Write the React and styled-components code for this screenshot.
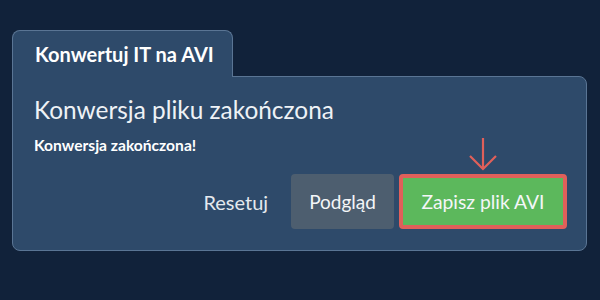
import React from 'react';
import styled, { createGlobalStyle } from 'styled-components';

const GlobalStyle = createGlobalStyle`
    html, body {
        margin: 0;
        padding: 0;
        background: #11223a;
        font-family: Lato, "Open Sans", sans-serif;
    }
`;

const Page = styled.div`
    width: 600px;
    height: 300px;
    box-sizing: border-box;
    padding: 30px 13px 0 12px;
`;

const Tab = styled.div`
    position: relative;
    z-index: 1;
    width: 221px;
    height: 47px;
    box-sizing: border-box;
    margin-bottom: -1px;
    padding: 0 0 0 22px;
    display: flex;
    align-items: center;
    background: #2e4a6a;
    border: 1px solid #5a7594;
    border-bottom: none;
    border-radius: 8px 8px 0 0;
    color: #ffffff;
    font-size: 20px;
    font-weight: 700;
`;

const Panel = styled.div`
    position: relative;
    height: 175px;
    box-sizing: border-box;
    padding: 18px 19px 0 21px;
    background: #2e4a6a;
    border: 1px solid #5a7594;
    border-radius: 0 8px 8px 8px;
    color: #ffffff;
`;

const Heading = styled.h2`
    margin: 0;
    font-size: 24.4px;
    font-weight: 400;
    line-height: 30px;
    color: #eef2f6;
`;

const Message = styled.p`
    margin: 11px 0 0 0;
    font-size: 15.6px;
    font-weight: 700;
    line-height: 18px;
`;

const Actions = styled.div`
    margin-top: 20px;
    display: flex;
    justify-content: flex-end;
    align-items: center;
    gap: 5px;
`;

const Button = styled.button`
    position: relative;
    height: 55px;
    box-sizing: border-box;
    padding: 0 ${(p) => (p.$highlight ? '18.5px' : '18px')};
    border: ${(p) => (p.$highlight ? '4px solid #e0605a' : 'none')};
    border-radius: 4px;
    background: ${(p) =>
        p.$variant === 'success' ? '#5cb85c' : p.$variant === 'secondary' ? '#4d5e6f' : 'transparent'};
    color: #f4f6f8;
    font-family: inherit;
    font-size: ${(p) => (p.$highlight ? '19.3px' : '19px')};
    font-weight: 400;
    cursor: pointer;
`;

const LinkButton = styled(Button)`
    padding: 0 18px 0 12px;
    color: #e4e9ee;
    font-size: 20px;
`;

const Arrow = styled.svg`
    position: absolute;
    left: 50%;
    top: -42px;
    margin-left: -15px;
    width: 30px;
    height: 36px;
`;

export default function App() {
    return (
        <Page>
            <GlobalStyle />
            <Tab>Konwertuj IT na AVI</Tab>
            <Panel>
                <Heading>Konwersja pliku zakończona</Heading>
                <Message>Konwersja zakończona!</Message>
                <Actions>
                    <LinkButton>Resetuj</LinkButton>
                    <Button $variant="secondary">Podgląd</Button>
                    <Button $variant="success" $highlight>
                        Zapisz plik AVI
                        <Arrow viewBox="0 0 30 36" fill="none" stroke="#e0605a" strokeWidth="2.2">
                            <path d="M15 2 V33" />
                            <path d="M2 20 L15 33 L28 20" />
                        </Arrow>
                    </Button>
                </Actions>
            </Panel>
        </Page>
    );
}
